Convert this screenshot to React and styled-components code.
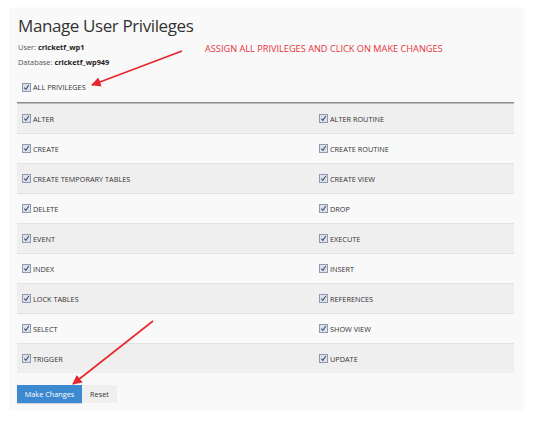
import React from "react";
import styled, { createGlobalStyle } from "styled-components";

const privileges = [
  ["ALTER", "ALTER ROUTINE"],
  ["CREATE", "CREATE ROUTINE"],
  ["CREATE TEMPORARY TABLES", "CREATE VIEW"],
  ["DELETE", "DROP"],
  ["EVENT", "EXECUTE"],
  ["INDEX", "INSERT"],
  ["LOCK TABLES", "REFERENCES"],
  ["SELECT", "SHOW VIEW"],
  ["TRIGGER", "UPDATE"],
];

const Check = () => (
  <Box>
    <svg width="7" height="7" viewBox="0 0 7 7">
      <path d="M1.3 3.6 L2.9 5.4 L5.8 1" fill="none" stroke="#3f5077" strokeWidth="1.1" />
    </svg>
  </Box>
);

const App = () => {
  return (
    <>
      <GlobalStyle />
      <Panel>
        <Title>Manage User Privileges</Title>
        <Meta>
          User: <b>cricketf_wp1</b>
        </Meta>
        <Meta>
          Database: <b>cricketf_wp949</b>
        </Meta>
        <AllRow>
          <Check />
          ALL PRIVILEGES
        </AllRow>
        <Table>
          {privileges.map(([left, right], i) => (
            <Row key={left} $odd={i % 2 === 0}>
              <Cell>
                <Check />
                {left}
              </Cell>
              <Cell>
                <Check />
                {right}
              </Cell>
            </Row>
          ))}
        </Table>
        <Actions>
          <PrimaryButton>Make Changes</PrimaryButton>
          <PlainButton>Reset</PlainButton>
        </Actions>

        <Note>ASSIGN ALL PRIVILEGES AND CLICK ON MAKE CHANGES</Note>
        <Arrows width="536" height="421" viewBox="0 0 536 421">
          <defs>
            <marker id="head" viewBox="0 0 10 10" refX="9" refY="5" markerWidth="6" markerHeight="6" orient="auto">
              <path d="M0 0 L10 5 L0 10 z" fill="#e8262b" />
            </marker>
          </defs>
          <line x1="182" y1="51" x2="92" y2="85" stroke="#e8262b" strokeWidth="1.6" markerEnd="url(#head)" />
          <line x1="153" y1="321" x2="73" y2="384" stroke="#e8262b" strokeWidth="1.6" markerEnd="url(#head)" />
        </Arrows>
      </Panel>
    </>
  );
};

export default App;

// Styled Components

const GlobalStyle = createGlobalStyle`
  body {
    margin: 0;
    background: #ffffff;
    font-family: "Open Sans", "Liberation Sans", sans-serif;
  }
`;

const Panel = styled.div`
  position: relative;
  margin: 8px 0 0 10px;
  width: 513px;
  height: 402px;
  box-sizing: border-box;
  padding: 0 9px 0 7px;
  background: #f9f9f9;
  box-shadow: 0 0 1px #e4e4e4;
  color: #333;
`;

const Title = styled.h1`
  margin: 0;
  padding: 6px 0 0 1px;
  font-size: 17px;
  letter-spacing: -0.4px;
  line-height: 24px;
  font-weight: 400;
  color: #333;
`;

const Meta = styled.div`
  padding-left: 1px;
  margin-top: 4px;
  font-size: 7.4px;
  line-height: 11px;
  color: #555;

  b {
    color: #222;
    font-weight: 700;
  }
`;

const AllRow = styled.div`
  display: flex;
  align-items: center;
  gap: 2px;
  margin: 13px 0 0 5px;
  height: 12px;
  font-size: 7.3px;
  color: #333;
`;

const Table = styled.div`
  margin-top: 9px;
  border-top: 1px solid #8c8c8c;
`;

const Row = styled.div`
  display: grid;
  grid-template-columns: 297px 1fr;
  height: 30px;
  box-sizing: border-box;
  border-top: 1px solid #e2e2e2;
  background: ${(p) => (p.$odd ? "#efefef" : "#f9f9f9")};

  &:first-child {
    border-top: 1px solid #bdbdbd;
  }
`;

const Cell = styled.div`
  display: flex;
  align-items: center;
  gap: 2px;
  padding-left: 5px;
  font-size: 7.3px;
  color: #333;
`;

const Box = styled.span`
  display: inline-flex;
  align-items: center;
  justify-content: center;
  width: 9px;
  height: 9px;
  box-sizing: border-box;
  border: 1px solid #8f9ab0;
  background: #dde1ea;
  flex-shrink: 0;
`;

const Actions = styled.div`
  display: flex;
  margin-top: 12px;
`;

const PrimaryButton = styled.button`
  height: 18px;
  width: 65px;
  padding: 0;
  border: none;
  background: #3c88d1;
  color: #fff;
  font-family: inherit;
  font-size: 7.3px;
  box-shadow: 0 1px 1px rgba(0, 0, 0, 0.15);
`;

const PlainButton = styled.button`
  height: 18px;
  width: 35px;
  padding: 0;
  border: none;
  background: #efefef;
  color: #333;
  font-family: inherit;
  font-size: 7.3px;
`;

const Note = styled.div`
  position: absolute;
  left: 195px;
  top: 34px;
  font-size: 9.2px;
  color: #e8333a;
`;

const Arrows = styled.svg`
  position: absolute;
  left: -10px;
  top: -8px;
  pointer-events: none;
`;
